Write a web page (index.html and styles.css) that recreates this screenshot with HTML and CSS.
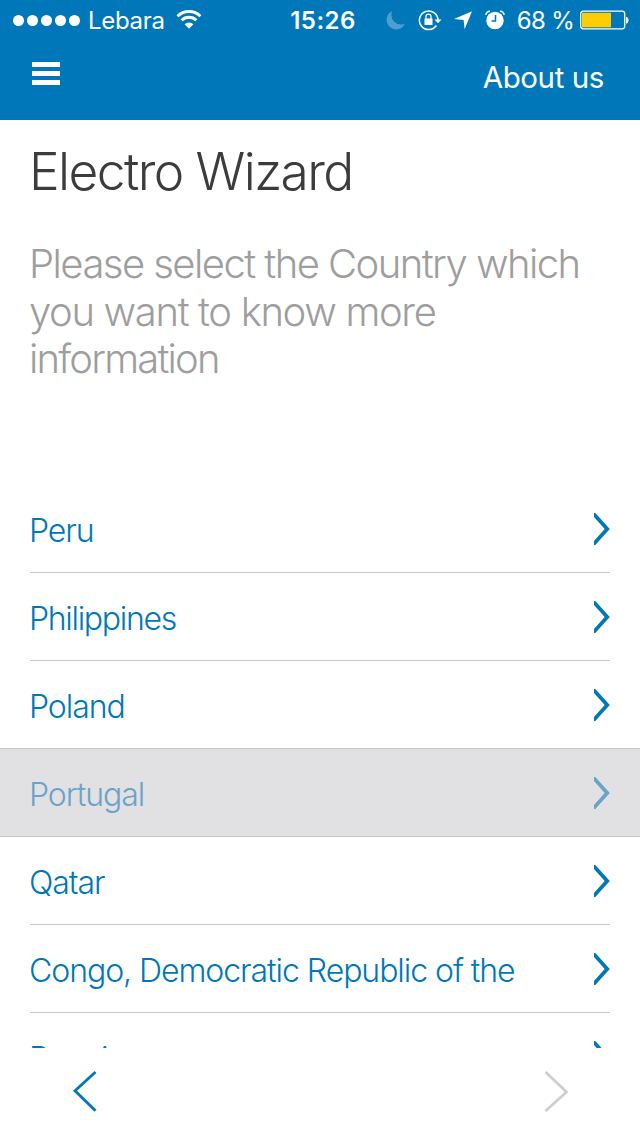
FILE: index.html
```html
<!DOCTYPE html>
<html lang="en">
<head>
  <meta charset="UTF-8">
  <meta name="viewport" content="width=device-width, initial-scale=1.0">
  <title>Electro Wizard</title>
  <link rel="stylesheet" href="styles.css">
</head>
<body>
  <header class="top-bar">
    <div class="status-bar">
      <div class="status-left">
        <div class="signal"><i></i><i></i><i></i><i></i><i></i></div>
        <span class="carrier">Lebara</span>
        <svg class="wifi" width="26" height="20" viewBox="0 0 26 20">
          <path d="M1.6 6.2a16.2 16.2 0 0 1 22.8 0M5.6 10.3a10.6 10.6 0 0 1 14.8 0" fill="none" stroke="#fff" stroke-width="2.9"/>
          <path d="M13 18.8l-4.4-4.5a6.2 6.2 0 0 1 8.8 0z" fill="#fff"/>
        </svg>
      </div>
      <span class="time">15:26</span>
      <div class="status-right">
        <svg class="moon" width="20" height="20" viewBox="0 0 20 20">
          <path d="M6.300 1A9.600 9.600 0 1 0 19 13.600A9.600 9.600 0 0 1 6.300 1z" fill="#4c9fd0"/>
        </svg>
        <svg class="lock" width="24" height="22" viewBox="0 0 24 22">
          <path d="M18.400 16.500A9.300 9.300 0 1 1 20 11" fill="none" stroke="#fff" stroke-width="1.500"/>
          <path d="M16.500 10.500h7l-3.500 3.800z" fill="#fff"/>
          <rect x="6.500" y="9.500" width="8" height="6.500" fill="#fff"/>
          <path d="M8 10V7.600a2.500 2.500 0 0 1 5 0V10" fill="none" stroke="#fff" stroke-width="1.300"/>
        </svg>
        <svg class="arrow" width="20" height="20" viewBox="0 0 20 20">
          <path d="M19 1.200L11.600 19.200l-1-9.200L1 9z" fill="#fff"/>
        </svg>
        <svg class="alarm" width="20" height="20" viewBox="0 0 20 20">
          <circle cx="10" cy="10.500" r="8.700" fill="#fff"/>
          <path d="M.8 4.800a4.500 4.500 0 0 1 4.200-3.600M19.200 4.800a4.500 4.500 0 0 0-4.200-3.600" fill="none" stroke="#fff" stroke-width="1.500"/>
          <path d="M10.500 5v6H6.500" fill="none" stroke="#0077b8" stroke-width="1.500"/>
        </svg>
        <span class="percent">68 %</span>
        <svg class="battery" width="50" height="20" viewBox="0 0 50 20">
          <rect x=".7" y="1.200" width="44" height="17.600" rx="2.500" fill="none" stroke="#fff" stroke-width="1.300"/>
          <rect x="2" y="2.800" width="29" height="14.500" fill="#ffcc00"/>
          <path d="M46 6.700c3.300.5 3.300 6.500 0 7z" fill="#fff"/>
        </svg>
      </div>
    </div>
    <nav class="nav-bar">
      <div class="menu"><i></i><i></i><i></i></div>
      <a class="about">About us</a>
    </nav>
  </header>

  <main class="content">
    <h1>Electro Wizard</h1>
    <p class="intro"><span class="line-1">Please select the Country which</span><br><span class="line-2">you want to know more</span><br><span class="line-3">information</span></p>
    <ul class="countries">
      <li class="country"><span class="peru">Peru</span><svg class="chevron" width="17" height="32" viewBox="0 0 17 32"><path d="M1 0h1.300L16.800 16 2.300 32H1v-4L11.700 16 1 4z"/></svg></li>
      <li class="country"><span class="philippines">Philippines</span><svg class="chevron" width="17" height="32" viewBox="0 0 17 32"><path d="M1 0h1.300L16.800 16 2.300 32H1v-4L11.700 16 1 4z"/></svg></li>
      <li class="country"><span>Poland</span><svg class="chevron" width="17" height="32" viewBox="0 0 17 32"><path d="M1 0h1.300L16.800 16 2.300 32H1v-4L11.700 16 1 4z"/></svg></li>
      <li class="country selected"><span>Portugal</span><svg class="chevron" width="17" height="32" viewBox="0 0 17 32"><path d="M1 0h1.300L16.800 16 2.300 32H1v-4L11.700 16 1 4z"/></svg></li>
      <li class="country"><span>Qatar</span><svg class="chevron" width="17" height="32" viewBox="0 0 17 32"><path d="M1 0h1.300L16.800 16 2.300 32H1v-4L11.700 16 1 4z"/></svg></li>
      <li class="country"><span>Congo, Democratic Republic of the</span><svg class="chevron" width="17" height="32" viewBox="0 0 17 32"><path d="M1 0h1.300L16.800 16 2.300 32H1v-4L11.700 16 1 4z"/></svg></li>
      <li class="country"><span>Reunion</span><svg class="chevron" width="17" height="32" viewBox="0 0 17 32"><path d="M1 0h1.300L16.800 16 2.300 32H1v-4L11.700 16 1 4z"/></svg></li>
    </ul>
  </main>

  <footer class="pager">
    <svg width="26" height="42" viewBox="0 0 26 42"><path d="M23.500 2L3 20.800l20.500 20" fill="none" stroke="#0077b8" stroke-width="2.800"/></svg>
    <svg width="26" height="42" viewBox="0 0 26 42"><path d="M2.500 2l21 20-21 19" fill="none" stroke="#cfcfcf" stroke-width="2.800"/></svg>
  </footer>
</body>
</html>
```
FILE: styles.css
```css
* {
  box-sizing: border-box;
}

body {
  margin: 0;
  height: 1136px;
  display: flex;
  flex-direction: column;
  overflow: hidden;
  background: #fff;
  font-family: Inter, "Liberation Sans", sans-serif;
}

/* Top bar */
.top-bar {
  height: 120px;
  flex: none;
  background: #0077b8;
  color: #fff;
}

.status-bar {
  height: 40px;
  padding: 0 10px 0 13px;
  display: grid;
  grid-template-columns: 1fr auto 1fr;
  align-items: center;
  font-size: 24px;
}

.status-left, .status-right, .signal {
  display: flex;
  align-items: center;
}

.status-right {
  justify-content: flex-end;
}

.signal {
  gap: 3px;
}

.signal i {
  width: 11px;
  height: 11px;
  border-radius: 50%;
  background: #fff;
}

.carrier {
  margin: 0 11px 0 8px;
  letter-spacing: -0.3px;
}

.time {
  margin-left: 3px;
  font-weight: 600;
  letter-spacing: 0.5px;
}

.moon { margin-right: 12px; }
.lock { margin-right: 11px; }
.arrow { margin-right: 12px; }
.alarm { margin-right: 12px; }

.percent {
  margin-right: 6px;
  letter-spacing: -0.7px;
  white-space: nowrap;
}

.nav-bar {
  height: 80px;
  padding: 0 36px 0 32px;
  display: flex;
  justify-content: space-between;
  align-items: flex-start;
}

.menu {
  padding-top: 22px;
  display: flex;
  flex-direction: column;
  gap: 4px;
}

.menu i {
  width: 28px;
  height: 5px;
  background: #fff;
}

.about {
  padding-top: 18px;
  font-size: 29.5px;
  line-height: 38px;
  letter-spacing: -0.4px;
}

/* Content */
.content {
  height: 928px;
  flex: none;
  overflow: hidden;
}

h1 {
  margin: 19px 29px 0;
  font-size: 51.5px;
  font-weight: 300;
  line-height: 64px;
  letter-spacing: -1.6px;
  color: #3c3c3c;
}

.intro {
  margin: 37px 29px 0;
  height: 245px;
  font-size: 40px;
  font-weight: 300;
  line-height: 47.5px;
  color: #9e9e9e;
}

.line-1 { letter-spacing: -1.55px; }
.line-2 { letter-spacing: -1.35px; }
.line-3 { letter-spacing: -1.8px; }

.countries {
  margin: 0;
  padding: 0;
  list-style: none;
}

.country {
  height: 88px;
  margin: 0 30px;
  display: flex;
  align-items: center;
  justify-content: space-between;
  border-bottom: 1px solid #c8c7cc;
  font-size: 32px;
  font-weight: 300;
  letter-spacing: -1.05px;
  color: #0077b8;
}

.country span {
  margin-left: -1px;
  padding-top: 3px;
}

.country .philippines {
  letter-spacing: -1.3px;
}

.country.selected {
  height: 89px;
  margin: -1px 0 0;
  padding: 0 30px;
  background: #e1e1e3;
  border-top: 1px solid #c8c7cc;
  color: #6ba3c8;
}

.chevron {
  fill: currentColor;
}

/* Pager */
.pager {
  height: 88px;
  padding: 22px 71px 0 72px;
  display: flex;
  justify-content: space-between;
  align-items: flex-start;
}
```
